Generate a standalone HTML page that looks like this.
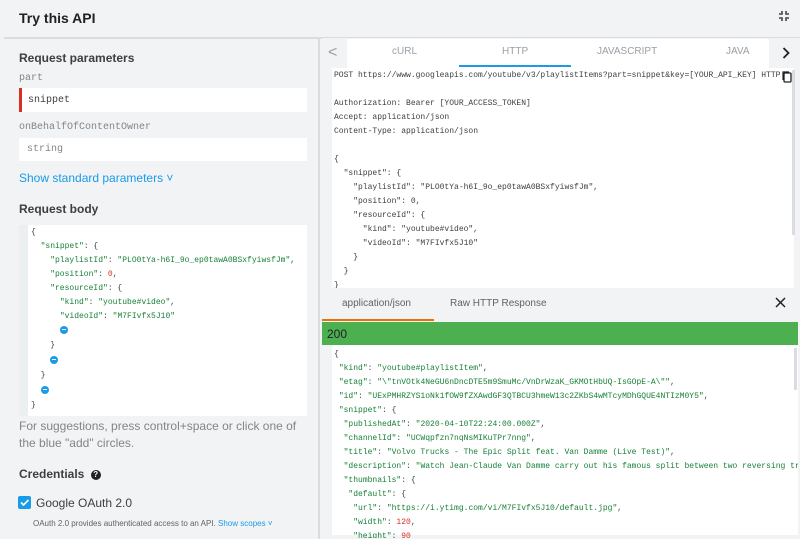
<!DOCTYPE html>
<html><head><meta charset="utf-8"><style>
*{margin:0;padding:0;box-sizing:border-box}
html,body{width:800px;height:539px;overflow:hidden}
body{background:#f1f3f4;font-family:"Liberation Sans",sans-serif;position:relative;color:#202124}
.abs{position:absolute}
.mono{font-family:"Liberation Mono",monospace}
.code{font-family:"Liberation Mono",monospace;font-size:8px;color:#37474f;overflow:hidden}
.ln{height:14px;line-height:14px;white-space:pre}
.g{color:#188038}
.r{color:#d93025}
.circ{display:inline-block;width:8px;height:8px;border-radius:50%;background:#1a9be8;position:relative;vertical-align:middle}
.circ:after{content:"";position:absolute;left:2px;top:3.5px;width:4px;height:1px;background:#fff}
</style></head><body>
<div class="abs" style="left:19px;top:10px;font-size:14px;font-weight:bold;color:#202124">Try this API</div>
<svg class="abs" style="left:778px;top:10px" width="12" height="12" viewBox="0 0 12 12"><path d="M1 4h3V1M8 1v3h3M1 8h3v3M8 11V8h3" stroke="#444" stroke-width="1.6" fill="none"/></svg>
<div class="abs" style="left:4px;top:37px;width:796px;height:2px;background:#dadce0"></div>
<div class="abs" style="left:318px;top:39px;width:2px;height:500px;background:#dadce0"></div>

<div class="abs" style="left:19px;top:51px;font-size:12px;font-weight:bold;color:#3c4043">Request parameters</div>
<div class="abs mono" style="left:19px;top:73px;font-size:10px;color:#80868b">part</div>
<div class="abs" style="left:19px;top:88px;width:288px;height:24px;background:#fff;border-left:3px solid #d93025"></div>
<div class="abs mono" style="left:28px;top:95px;font-size:10px;color:#3c4043">snippet</div>
<div class="abs mono" style="left:19px;top:122px;font-size:10px;color:#80868b">onBehalfOfContentOwner</div>
<div class="abs" style="left:19px;top:138px;width:288px;height:23px;background:#fff"></div>
<div class="abs mono" style="left:27px;top:144px;font-size:10px;color:#80868b">string</div>
<div class="abs" style="left:19px;top:171px;font-size:12px;color:#1a9be8">Show standard parameters ˅</div>
<div class="abs" style="left:19px;top:202px;font-size:12px;font-weight:bold;color:#3c4043">Request body</div>
<div class="abs" style="left:19px;top:225px;width:288px;height:191px;background:#fff"></div>
<div class="abs" style="left:19px;top:225px;width:9px;height:191px;background:#eceff1"></div>
<div class="abs code" style="left:31px;top:226px;width:274px;height:190px"><div class="ln">{</div><div class="ln">  <span class="g">"snippet"</span>: {</div><div class="ln">    <span class="g">"playlistId"</span>: <span class="g">"PLO0tYa-h6I_9o_ep0tawA0BSxfyiwsfJm"</span>,</div><div class="ln">    <span class="g">"position"</span>: <span class="r">0</span>,</div><div class="ln">    <span class="g">"resourceId"</span>: {</div><div class="ln">      <span class="g">"kind"</span>: <span class="g">"youtube#video"</span>,</div><div class="ln">      <span class="g">"videoId"</span>: <span class="g">"M7FIvfx5J10"</span></div><div class="ln" style="height:15px">      <span class="circ"></span></div><div class="ln" style="height:15px">    }</div><div class="ln" style="height:15px">    <span class="circ"></span></div><div class="ln" style="height:15px">  }</div><div class="ln" style="height:15px">  <span class="circ"></span></div><div class="ln">}</div></div>
<div class="abs" style="left:19px;top:418px;width:290px;font-size:12px;line-height:17px;color:#80868b">For suggestions, press control+space or click one of the blue "add" circles.</div>
<div class="abs" style="left:19px;top:467px;font-size:12px;font-weight:bold;color:#3c4043">Credentials <span style="display:inline-block;width:10px;height:10px;border-radius:50%;background:#202124;color:#fff;font-size:8px;line-height:10px;text-align:center;vertical-align:1px;margin-left:3px">?</span></div>
<div class="abs" style="left:18px;top:496px;width:13px;height:13px;background:#1a9be8;border-radius:2px"><svg width="13" height="13" viewBox="0 0 13 13"><path d="M3 6.5l2.5 2.5L10.5 4" stroke="#fff" stroke-width="1.6" fill="none"/></svg></div>
<div class="abs" style="left:36px;top:496px;font-size:12px;color:#3c4043">Google OAuth 2.0</div>
<div class="abs" style="left:33px;top:519px;font-size:8px;color:#5f6368">OAuth 2.0 provides authenticated access to an API. <span style="color:#1a9be8">Show scopes ˅</span></div>

<div class="abs" style="left:322px;top:38px;width:478px;height:30px;background:#f1f3f4"></div>
<div class="abs" style="left:347px;top:39px;width:422px;height:29px;background:#fff"></div>
<div class="abs" style="left:328px;top:44px;font-size:16px;color:#9aa0a6">&lt;</div>
<svg class="abs" style="left:782px;top:47px" width="8" height="12" viewBox="0 0 8 12"><path d="M1.5 1l5 5-5 5" stroke="#202124" stroke-width="1.8" fill="none"/></svg>
<div class="abs" style="left:392px;top:46px;font-size:10px;color:#9aa0a6">cURL</div>
<div class="abs" style="left:502px;top:46px;font-size:10px;color:#9aa0a6">HTTP</div>
<div class="abs" style="left:597px;top:46px;font-size:10px;color:#9aa0a6">JAVASCRIPT</div>
<div class="abs" style="left:726px;top:46px;font-size:10px;color:#9aa0a6">JAVA</div>
<div class="abs" style="left:459px;top:65px;width:112px;height:2px;background:#1a9be8"></div>
<div class="abs" style="left:332px;top:68px;width:462px;height:220px;background:#fff"></div>
<div class="abs" style="left:792px;top:70px;width:3px;height:165px;background:#dadce0"></div>
<div class="abs code" style="left:334px;top:69px;width:446px;height:219px;color:#3c4043"><div class="ln">POST https://www.googleapis.com/youtube/v3/playlistItems?part=snippet&amp;key=[YOUR_API_KEY] HTTP/1.1</div><div class="ln"> </div><div class="ln">Authorization: Bearer [YOUR_ACCESS_TOKEN]</div><div class="ln">Accept: application/json</div><div class="ln">Content-Type: application/json</div><div class="ln"> </div><div class="ln">{</div><div class="ln">  "snippet": {</div><div class="ln">    "playlistId": "PLO0tYa-h6I_9o_ep0tawA0BSxfyiwsfJm",</div><div class="ln">    "position": 0,</div><div class="ln">    "resourceId": {</div><div class="ln">      "kind": "youtube#video",</div><div class="ln">      "videoId": "M7FIvfx5J10"</div><div class="ln">    }</div><div class="ln">  }</div><div class="ln">}</div></div>
<svg class="abs" style="left:782px;top:71px" width="10" height="12" viewBox="0 0 10 12"><rect x="2" y="2" width="7" height="9" rx="1" stroke="#202124" stroke-width="1.3" fill="#fff"/><path d="M1 9V1h6" stroke="#202124" stroke-width="1.2" fill="none"/></svg>

<div class="abs" style="left:322px;top:288px;width:478px;height:33px;background:#f1f3f4"></div>
<div class="abs" style="left:342px;top:298px;font-size:10px;color:#5f6368">application/json</div>
<div class="abs" style="left:450px;top:298px;font-size:10px;color:#5f6368">Raw HTTP Response</div>
<svg class="abs" style="left:775px;top:297px" width="11" height="11" viewBox="0 0 11 11"><path d="M1 1l9 9M10 1l-9 9" stroke="#202124" stroke-width="1.5"/></svg>
<div class="abs" style="left:322px;top:319px;width:112px;height:2px;background:#e8710a"></div>
<div class="abs" style="left:322px;top:322px;width:476px;height:23px;background:#4caf50"></div>
<div class="abs" style="left:327px;top:327px;font-size:12px;color:#202124">200</div>
<div class="abs" style="left:332px;top:345px;width:466px;height:190px;background:#fff"></div>
<div class="abs" style="left:794px;top:348px;width:3px;height:42px;background:#dadce0"></div>
<div class="abs code" style="left:334px;top:348px;width:464px;height:190px"><div class="ln">{</div><div class="ln"> <span class="g">"kind"</span>: <span class="g">"youtube#playlistItem"</span>,</div><div class="ln"> <span class="g">"etag"</span>: <span class="g">"\"tnVOtk4NeGU6nDncDTE5m9SmuMc/VnDrWzaK_GKMOtHbUQ-IsGOpE-A\""</span>,</div><div class="ln"> <span class="g">"id"</span>: <span class="g">"UExPMHRZYS1oNk1fOW9fZXAwdGF3QTBCU3hmeW13c2ZKbS4wMTcyMDhGQUE4NTIzM0Y5"</span>,</div><div class="ln"> <span class="g">"snippet"</span>: {</div><div class="ln">  <span class="g">"publishedAt"</span>: <span class="g">"2020-04-10T22:24:00.000Z"</span>,</div><div class="ln">  <span class="g">"channelId"</span>: <span class="g">"UCWqpfzn7nqNsMIKuTPr7nng"</span>,</div><div class="ln">  <span class="g">"title"</span>: <span class="g">"Volvo Trucks - The Epic Split feat. Van Damme (Live Test)"</span>,</div><div class="ln">  <span class="g">"description"</span>: <span class="g">"Watch Jean-Claude Van Damme carry out his famous split between two reversing trucks</span></div><div class="ln">  <span class="g">"thumbnails"</span>: {</div><div class="ln">   <span class="g">"default"</span>: {</div><div class="ln">    <span class="g">"url"</span>: <span class="g">"https://i.ytimg.com/vi/M7FIvfx5J10/default.jpg"</span>,</div><div class="ln">    <span class="g">"width"</span>: <span class="r">120</span>,</div><div class="ln">    <span class="g">"height"</span>: <span class="r">90</span></div></div>
</body></html>
